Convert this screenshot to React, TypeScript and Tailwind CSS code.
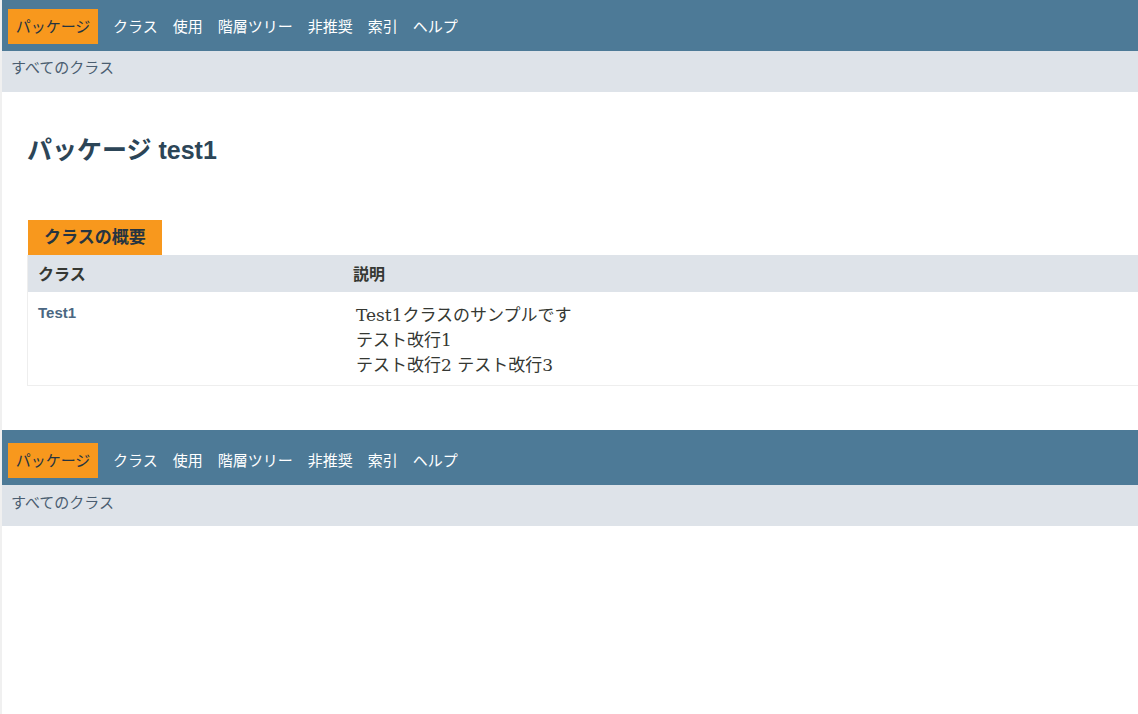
import React from "react";

const sans = { fontFamily: '"Liberation Sans", Arial, "Noto Sans CJK JP", sans-serif' };
const serif = { fontFamily: '"DejaVu Serif", "Noto Sans CJK JP", serif' };

const items = ["クラス", "使用", "階層ツリー", "非推奨", "索引", "ヘルプ"];

function NavBar({ bottom }: { bottom?: boolean }) {
  return (
    <div>
      <div
        className={
          bottom
            ? "h-[55px] bg-[#4d7a97] flex items-start pt-[13px] pl-[6px] gap-[15px]"
            : "h-[51px] bg-[#4d7a97] flex items-start pt-[9px] pl-[6px] gap-[15px]"
        }
      >
        <div className="h-[35px] w-[90px] bg-[#f8981d] text-[#253441] text-[15px] flex items-center justify-center leading-[20px]">
          パッケージ
        </div>
        {items.map((t) => (
          <div key={t} className="h-[35px] flex items-center text-white text-[15px] leading-[20px]">
            {t}
          </div>
        ))}
      </div>
      <div
        className={
          bottom
            ? "h-[41px] bg-[#dee3e9] pl-[9px] pt-[8px] text-[15px] leading-[20px] text-[#4a5d70]"
            : "h-[41px] bg-[#dee3e9] pl-[9px] pt-[7px] text-[15px] leading-[20px] text-[#4a5d70]"
        }
      >
        すべてのクラス
      </div>
    </div>
  );
}

export default function App() {
  return (
    <div className="flex min-h-[714px] bg-white overflow-hidden" style={sans}>
      <div className="w-[2px] shrink-0 bg-[#f0f0f0]" />
      <div className="flex-1 min-w-0">
        <NavBar />
        <div className="pl-[25px]">
          <h1 className="pt-[43px] text-[25px] leading-[30px] font-bold text-[#2c4557]">
            パッケージ test1
          </h1>
          <div className="mt-[55px]">
            <div className="ml-[1px] inline-flex h-[35px] items-center bg-[#f8981d] px-[16px] text-[17px] font-bold text-[#253441] leading-[20px]">
              クラスの概要
            </div>
            <div className="border-l border-b border-[#eeeeee]">
              <div className="flex h-[37px] items-center bg-[#dee3e9] text-[16px] font-bold text-[#353833] leading-[20px] pt-[2px]">
                <div className="w-[315px] pl-[10px]">クラス</div>
                <div className="pl-[10px]">説明</div>
              </div>
              <div className="flex h-[93px]">
                <div className="w-[315px] pl-[10px] pt-[11px] text-[15px] font-bold text-[#4a6782] leading-[20px]">
                  Test1
                </div>
                <div
                  className="pl-[13px] pt-[11px] text-[17px] leading-[25px] text-[#353833]"
                  style={serif}
                >
                  <div>Test1クラスのサンプルです</div>
                  <div>テスト改行1</div>
                  <div>テスト改行2 テスト改行3</div>
                </div>
              </div>
            </div>
          </div>
        </div>
        <div className="mt-[44px]">
          <NavBar bottom />
        </div>
      </div>
    </div>
  );
}
